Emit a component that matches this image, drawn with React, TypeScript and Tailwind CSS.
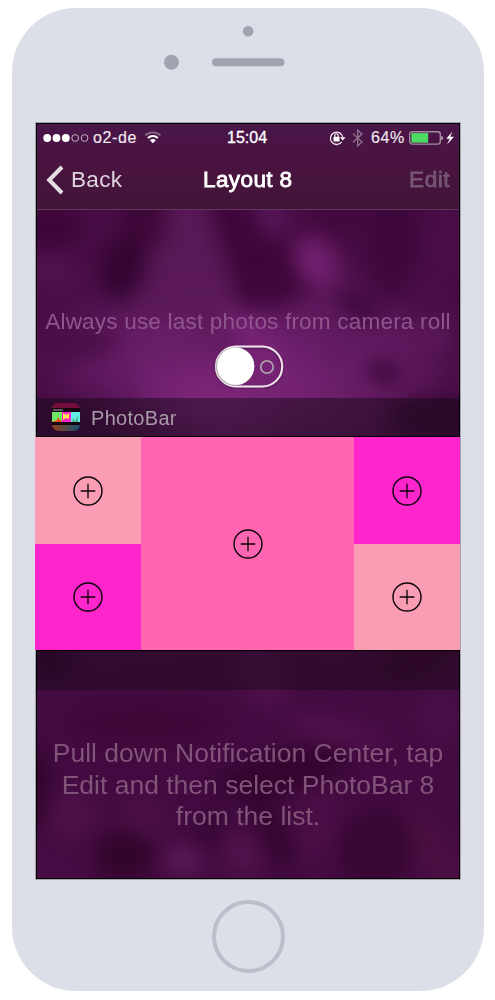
const tones: Record<string, string> = {
  blush: "bg-[#fa9cb4]",
  magenta: "bg-[#fd25cb]",
  pink: "bg-[#ff65b0]",
};

type Blob = [cx: number, cy: number, rx: number, ry: number, rotate: number, fill: string, opacity: number];

// Coordinates are relative to the 424x756 wallpaper.
const wideBlobs: Blob[] = [
  [210, 235, 190, 70, 0, "#641c65", 1],
  [205, 275, 90, 50, 0, "#8a2b86", 1],
  [300, 290, 110, 45, 10, "#6c2069", 0.6],
  [212, 440, 260, 90, 0, "#4a0d47", 1],
  [210, 640, 260, 130, 0, "#430b40", 0.9],
];

const blobs: Blob[] = [
  [15, 104, 34, 20, 0, "#36022f", 0.6],
  [15, 150, 30, 18, 0, "#541452", 0.7],
  [88, 145, 22, 34, 12, "#2c0129", 0.75],
  [108, 100, 24, 34, 12, "#390533", 0.7],
  [235, 95, 16, 22, -20, "#5e1a60", 0.7],
  [280, 138, 20, 26, -35, "#7c2479", 0.75],
  [305, 92, 36, 16, 5, "#3e0739", 0.8],
  [358, 118, 26, 60, 5, "#3a0538", 0.7],
  [405, 130, 22, 60, 12, "#4a0d48", 0.7],
  [322, 183, 26, 12, 35, "#360433", 0.75],
  [44, 220, 36, 17, -5, "#440b41", 0.7],
  [348, 249, 17, 11, 20, "#330430", 0.85],
  [215, 215, 36, 16, 40, "#7a2479", 0.7],
  [395, 215, 24, 16, 0, "#5c1a5b", 0.7],
  [400, 295, 50, 22, 0, "#35052f", 0.8],
  [20, 300, 50, 22, 0, "#42083e", 0.7],
  [14, 535, 22, 25, 0, "#2e0328", 0.7],
  [225, 548, 24, 40, -25, "#5a1655", 0.6],
  [380, 540, 45, 22, -10, "#3a0530", 0.7],
  [110, 600, 80, 26, 0, "#3d0736", 0.7],
  [300, 608, 50, 12, 12, "#56134f", 0.8],
  [402, 592, 22, 30, 0, "#4b1048", 0.8],
  [245, 650, 70, 20, -12, "#31042b", 0.85],
  [0, 665, 12, 42, 0, "#2a0324", 0.8],
  [36, 692, 26, 24, 35, "#53144c", 0.7],
  [108, 695, 24, 22, 35, "#501348", 0.7],
  [88, 733, 30, 26, 0, "#2e0427", 0.8],
  [147, 737, 19, 15, 0, "#66205f", 0.75],
  [174, 708, 12, 20, 30, "#330530", 0.75],
  [206, 730, 18, 24, -25, "#57154f", 0.75],
  [236, 706, 12, 44, -25, "#2e0429", 0.8],
  [280, 700, 22, 40, 10, "#4f1049", 0.7],
  [340, 728, 36, 40, 15, "#32042c", 0.7],
  [397, 727, 18, 45, -25, "#4b1041", 0.8],
];

function Blobs({ items }: { items: Blob[] }) {
  return (
    <>
      {items.map(([cx, cy, rx, ry, rotate, fill, opacity], i) => (
        <ellipse key={i} cx={cx} cy={cy} rx={rx} ry={ry} fill={fill} opacity={opacity} transform={`rotate(${rotate} ${cx} ${cy})`} />
      ))}
    </>
  );
}

function Wallpaper() {
  return (
    <svg className="absolute inset-0 size-full" viewBox="0 0 424 756" preserveAspectRatio="none" aria-hidden="true">
      <defs>
        <filter id="soft" x="-40%" y="-40%" width="180%" height="180%" colorInterpolationFilters="sRGB">
          <feGaussianBlur stdDeviation="10" />
        </filter>
        <filter id="softer" x="-40%" y="-40%" width="180%" height="180%" colorInterpolationFilters="sRGB">
          <feGaussianBlur stdDeviation="26" />
        </filter>
      </defs>
      <rect width="424" height="756" fill="#480d45" />
      <g filter="url(#softer)"><Blobs items={wideBlobs} /></g>
      <g filter="url(#soft)">
        <path d="M132 70h36l42 108-8 60h-90l-30-50Z" fill="#5b1959" opacity=".9" />
        <path d="M172 80h46l62 82-36 22h-40Z" fill="#3c0637" opacity=".9" />
        <path d="m95 205 50-10 110 80H115Z" fill="#71226e" opacity=".6" />
        <path d="m255 130 30-10 50 60 20 50-60 10Z" fill="#5e1a5e" opacity=".5" />
        <Blobs items={blobs} />
      </g>
    </svg>
  );
}

function StatusBar() {
  return (
    <div className="flex h-[29px] items-center text-[16px] leading-none text-[#f1e9f0]">
      <div className="flex w-[191px] items-center pl-[7px]">
        <svg className="h-[12px] w-[46px]" viewBox="0 0 46 12">
          <circle cx="4.2" cy="6" r="3.9" fill="white" />
          <circle cx="13.5" cy="6" r="3.9" fill="white" />
          <circle cx="22.8" cy="6" r="3.9" fill="white" />
          <circle cx="32.2" cy="6" r="3.4" fill="none" stroke="#c5b3c3" strokeWidth="1" />
          <circle cx="41.6" cy="6" r="3.4" fill="none" stroke="#c5b3c3" strokeWidth="1" />
        </svg>
        <span className="ml-[4px] w-[44px] whitespace-nowrap tracking-[0.6px] [-webkit-text-stroke:0.15px]">o2-de</span>
        <svg className="ml-[7px] h-[13px] w-[18px]" viewBox="0 0 18 13" fill="none">
          <path d="M1.3 4.4C5.5.3 12.1.3 16.5 4.4" stroke="#88668a" strokeWidth="1.8" />
          <path d="M3.9 7.1c2.8-2.7 7-2.7 9.9 0" stroke="white" strokeWidth="2" />
          <path d="M5.9 9.2c1.7-1.5 4.2-1.5 6 0l-3 3.1Z" fill="white" />
        </svg>
      </div>
      <span className="w-[60px] whitespace-nowrap text-[16px] text-white [-webkit-text-stroke:0.3px]">15:04</span>
      <div className="ml-[42px] flex items-center">
        <svg className="h-[16px] w-[17px]" viewBox="0 0 17 16" fill="none">
          <path d="M12.7 11.9A6.2 6.2 0 1 1 13.8 7.5" stroke="#eee6ed" strokeWidth="1.3" />
          <path d="M11 7.2h5.6l-2.8 3.3Z" fill="white" />
          <rect x="4.5" y="6.8" width="6" height="4.6" rx=".5" fill="white" />
          <path d="M5.8 7V5.5a1.7 1.7 0 0 1 3.4 0V7" stroke="white" strokeWidth="1.1" />
        </svg>
        <svg className="ml-[6px] h-[18px] w-[12px]" viewBox="0 0 12 18" fill="none" stroke="#91768f" strokeWidth="1.3">
          <path d="m1 4.6 9 8.5-4.3 3.8V1.2L10 5l-9 8.3" />
        </svg>
        <span className="ml-[7px] w-[34px] whitespace-nowrap tracking-[0.6px] [-webkit-text-stroke:0.15px]">64%</span>
        <svg className="ml-[4px] h-[16px] w-[46px]" viewBox="0 0 46 16" fill="none">
          <rect x=".7" y="1.7" width="30.6" height="12.4" rx="2.6" stroke="#a08b9e" strokeWidth="1.4" />
          <path d="M2.4 3.1h16.8v9.6H2.4Z" fill="#4cda64" />
          <path d="M32.4 5.9c2 .4 2 3.8 0 4.2Z" fill="#d5c7d3" />
          <path d="m43.4 1.6-6.2 7.1h3.5L38 14.4l7-7.7h-3.8Z" fill="white" />
        </svg>
      </div>
    </div>
  );
}

function NavBar() {
  return (
    <div className="flex h-[57px] items-center px-[10px] pb-[1px] text-[22.6px] leading-none">
      <button className="flex w-[157px] items-center text-[#dfd5de]">
        <svg className="h-[30px] w-[18px]" viewBox="0 0 18 30" fill="none" stroke="#e5dfe4" strokeWidth="4">
          <path d="M16 2 3.2 15 16 28" />
        </svg>
        <span className="ml-[7px] whitespace-nowrap tracking-[0.3px]">Back</span>
      </button>
      <h1 className="w-[92px] whitespace-nowrap font-normal tracking-[0.35px] text-white [-webkit-text-stroke:0.8px]">Layout 8</h1>
      <button className="ml-auto whitespace-nowrap text-[#765773] tracking-[0.5px] [-webkit-text-stroke:0.8px]">Edit</button>
    </div>
  );
}

function Toggle() {
  return (
    <svg className="ml-[2px] h-[46px] w-[74px]" viewBox="0 0 74 46" role="switch" aria-checked="false">
      <defs>
        <filter id="knob" x="-20%" y="-20%" width="140%" height="140%">
          <feDropShadow dx="0" dy="1" stdDeviation="1" floodColor="#000" floodOpacity=".35" />
        </filter>
      </defs>
      <rect x="4" y="3.5" width="66.2" height="40" rx="20" fill="none" stroke="#eee6ed" strokeWidth="2" filter="url(#knob)" />
      <circle cx="23" cy="23.5" r="19.2" fill="#b9b4b8" />
      <circle cx="23.7" cy="23.2" r="18.6" fill="white" />
      <circle cx="55" cy="24" r="6.2" fill="none" stroke="#aaa0a9" strokeWidth="1.8" />
    </svg>
  );
}

function AppIcon() {
  return (
    <svg className="size-[28px]" viewBox="0 0 28 28">
      <defs>
        <clipPath id="icon-shape"><rect width="28" height="28" rx="6.5" /></clipPath>
        <linearGradient id="icon-base" x2="1">
          <stop stopColor="#934018" />
          <stop offset=".4" stopColor="#60463e" />
          <stop offset="1" stopColor="#155277" />
        </linearGradient>
      </defs>
      <g clipPath="url(#icon-shape)">
        <rect width="28" height="28" fill="url(#icon-base)" />
        <path d="M0 0h28v6H0Z" fill="#750d3d" />
        <path d="M0 5h28v17H0Z" fill="#15050f" />
        <path d="M1 7h10" stroke="#b4a7b1" strokeWidth="1" />
        <path d="M0 9h10v10H0Z" fill="#70e867" />
        <path d="M10 9h9v10h-9Z" fill="#ff20c8" />
        <path d="M19 9h9v10h-9Z" fill="#64eee8" />
        <path d="m0 19 5-2 1-3 2 3 2 1v1Z" fill="#ed4b19" />
        <path d="m11 10 3 2 3-2v6l-3-1-3 2Z" fill="#ffe84a" />
        <path d="m20 19 1-4 2 3 3-6v7Z" fill="#4cb78f" />
      </g>
    </svg>
  );
}

function Tile({ tone, className = "" }: { tone: string; className?: string }) {
  return (
    <button className={`flex items-center justify-center ${tones[tone]} ${className}`} aria-label="Add photo">
      <svg className="size-[30px]" viewBox="0 0 30 30" fill="none" stroke="#080507" strokeWidth="1.4">
        <circle cx="15" cy="15" r="14" />
        <path d="M15 7.7v14.6M7.7 15h14.6" strokeWidth="1.3" />
      </svg>
    </button>
  );
}

function Screen() {
  return (
    <main className="relative h-[758px] w-[426px] border border-[#a5a3ae] bg-black">
      <Wallpaper />
      <div className="relative flex h-[756px] flex-col">
        <header className="h-[87px] border-b border-[#633360] bg-[linear-gradient(#4a1549,#49133f_55%,#411638)]">
          <StatusBar />
          <NavBar />
        </header>
        <section className="flex h-[188px] flex-col items-center pt-[100px] text-[22.6px] text-[#8f568d]">
          <p className="whitespace-nowrap leading-[24px] tracking-[0.16px]">Always use last photos from camera roll</p>
          <div className="mt-[9px]"><Toggle /></div>
        </section>
        <div className="flex h-[39px] items-center border-b border-black bg-[#180a1a]/50 pl-[16px]">
          <AppIcon />
          <span className="ml-[11px] pt-[2px] text-[20px] leading-none tracking-[0.3px] text-[#a79ba7]">PhotoBar</span>
        </div>
        <div className="-ml-px grid h-[213px] grid-cols-[106px_213px_106px] grid-rows-[107px_106px]">
          <Tile tone="blush" />
          <Tile tone="pink" className="row-span-2" />
          <Tile tone="magenta" />
          <Tile tone="magenta" />
          <Tile tone="blush" />
        </div>
        <div className="h-[40px] border-t border-black bg-[#1c0a1b]/50" />
        <p className="pt-[48px] text-center text-[26.5px] leading-[31.7px] text-[#815379]">
          Pull down Notification Center, tap
          <br />
          Edit and then select PhotoBar 8
          <br />
          from the list.
        </p>
      </div>
      <div className="pointer-events-none absolute inset-x-0 top-0 h-[314px] border-x border-t border-black" />
      <div className="pointer-events-none absolute inset-x-0 bottom-0 h-[229px] border-x border-b border-black" />
    </main>
  );
}

export default function App() {
  return (
    <div className="h-[1000px] w-[495px] bg-white pl-[12px] pt-[8px] font-['Liberation_Sans',Arial,sans-serif]">
      <div className="flex h-[983px] w-[472px] flex-col items-center rounded-[64px] bg-[#dcdfe7]">
        <svg className="h-[114px] w-full shrink-0" viewBox="0 0 472 114" fill="#a1a3b3">
          <circle cx="236.2" cy="23.3" r="5.3" />
          <circle cx="159.5" cy="54.3" r="7.5" />
          <rect x="200" y="50.2" width="72.5" height="8" rx="4" />
        </svg>
        <Screen />
        <button className="mt-[20px] size-[73px] rounded-full border-4 border-[#bcbecb]" aria-label="Home" />
      </div>
    </div>
  );
}
